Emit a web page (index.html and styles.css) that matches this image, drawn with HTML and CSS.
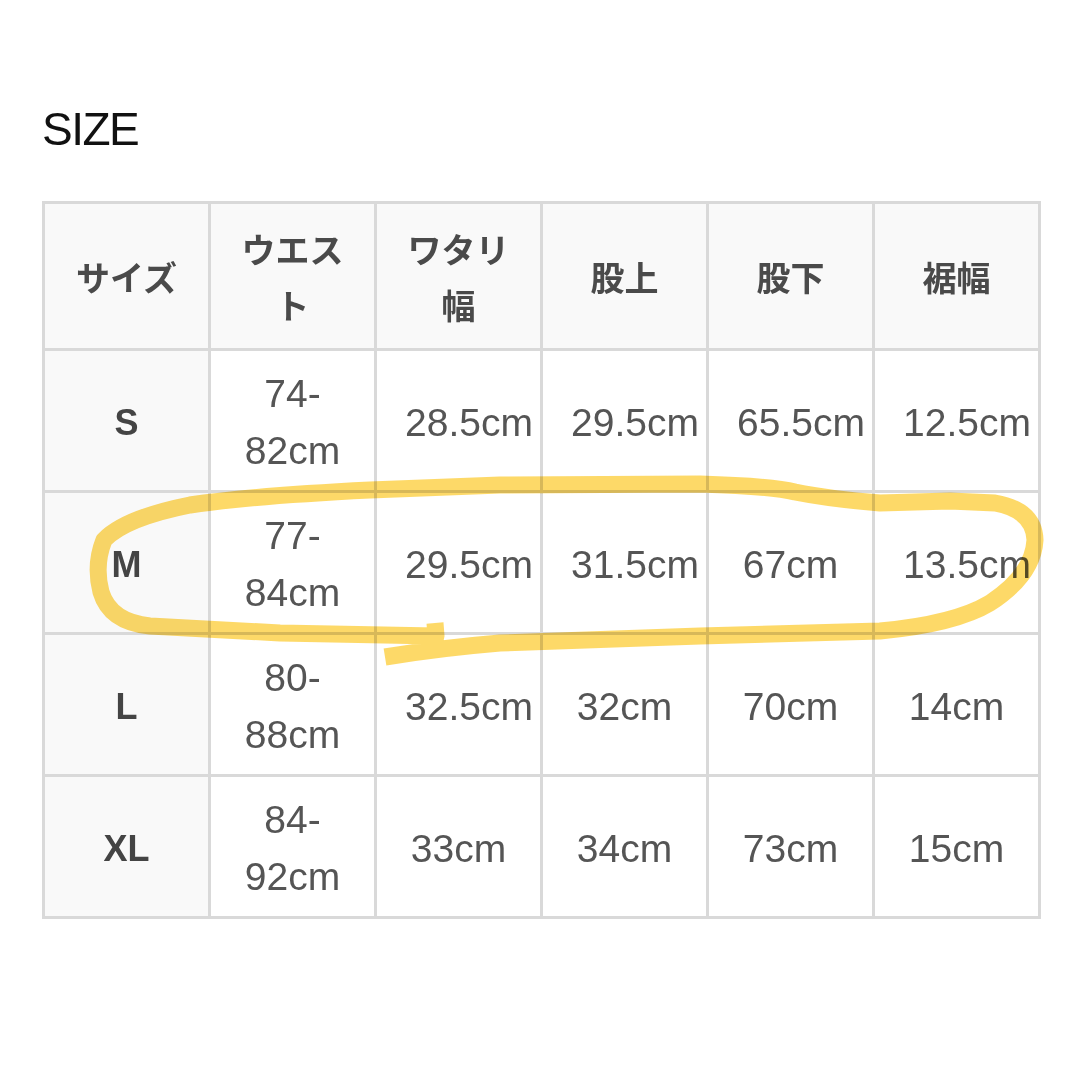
FILE: index.html
```html
<!DOCTYPE html>
<html lang="ja">
<head>
    <meta charset="UTF-8">
    <meta name="viewport" content="width=device-width, initial-scale=1.0">
    <title>SIZE</title>
    <link rel="stylesheet" href="styles.css">
</head>
<body>

    <div class="page">
        <h2 class="title">SIZE</h2>

        <!-- サイズ表 -->
        <table class="size-table">
            <thead>
                <tr>
                    <th>サイズ</th>
                    <th>ウエスト</th>
                    <th>ワタリ幅</th>
                    <th>股上</th>
                    <th>股下</th>
                    <th>裾幅</th>
                </tr>
            </thead>
            <tbody>
                <tr>
                    <th>S</th>
                    <td>74-<wbr>82cm</td>
                    <td>28.5cm</td>
                    <td>29.5cm</td>
                    <td>65.5cm</td>
                    <td>12.5cm</td>
                </tr>
                <tr>
                    <th>M</th>
                    <td>77-<wbr>84cm</td>
                    <td>29.5cm</td>
                    <td>31.5cm</td>
                    <td>67cm</td>
                    <td>13.5cm</td>
                </tr>
                <tr>
                    <th>L</th>
                    <td>80-<wbr>88cm</td>
                    <td>32.5cm</td>
                    <td>32cm</td>
                    <td>70cm</td>
                    <td>14cm</td>
                </tr>
                <tr>
                    <th>XL</th>
                    <td>84-<wbr>92cm</td>
                    <td>33cm</td>
                    <td>34cm</td>
                    <td>73cm</td>
                    <td>15cm</td>
                </tr>
            </tbody>
        </table>

        <!-- 蛍光ペンの丸 -->
        <svg class="marker" viewBox="0 0 1080 1080" width="1080" height="1080">
            <path d="M385 657 Q440 648 500 643 L700 636 L880 631 Q955 624 990 603 Q1033 575 1035 540 Q1034 510 995 503 L950 501 L880 503 Q830 499 795 492 Q770 486 700 484 L500 485 L370 490 Q250 496 190 505 Q125 518 104 540 Q94 565 101 592 Q110 622 150 626 L280 633 L436 636 L435 623"/>
        </svg>
    </div>

</body>
</html>
```

FILE: styles.css
```css
body {
    margin: 0;
    padding: 0;
    background-color: #fff;
    font-family: "Liberation Sans", "Noto Sans CJK JP", sans-serif;
}
.page {
    position: relative;
    width: 1080px;
    height: 1080px;
    padding-left: 42px;
    box-sizing: border-box;
    overflow: hidden;
}
.title {
    margin: 103px 0 45px;
    font-size: 46px;
    font-weight: normal;
    line-height: 53px;
    letter-spacing: -1.5px;
    color: #111;
}
.size-table {
    width: 999px;
    table-layout: fixed;
    border-collapse: separate;
    border-spacing: 0;
    border-top: 3px solid #d9d9d9;
    border-left: 3px solid #d9d9d9;
}
.size-table th, .size-table td {
    border-right: 3px solid #d9d9d9;
    border-bottom: 3px solid #d9d9d9;
    padding: 0 28px;
    text-align: center;
    vertical-align: middle;
}
.size-table thead th {
    padding-top: 17px;
    padding-bottom: 15px;
    background-color: #f9f9f9;
    font-family: "Noto Sans CJK JP", sans-serif;
    font-size: 34px;
    font-weight: bold;
    line-height: 56px;
    color: #4a4a4a;
}
.size-table tbody th {
    background-color: #f9f9f9;
    font-size: 36px;
    font-weight: bold;
    color: #444;
}
.size-table td {
    padding-top: 14px;
    padding-bottom: 11px;
    font-size: 39px;
    line-height: 57px;
    color: #555;
}
.size-table tbody th {
    padding-top: 14px;
    padding-bottom: 11px;
    line-height: 57px;
}

/* 蛍光ペン */
.marker {
    position: absolute;
    top: 0;
    left: 0;
    pointer-events: none;
    mix-blend-mode: multiply;
}
.marker path {
    fill: none;
    stroke: #fdd24e;
    stroke-opacity: 0.85;
    stroke-width: 17;
    stroke-linejoin: round;
    stroke-linecap: butt;
}
```
